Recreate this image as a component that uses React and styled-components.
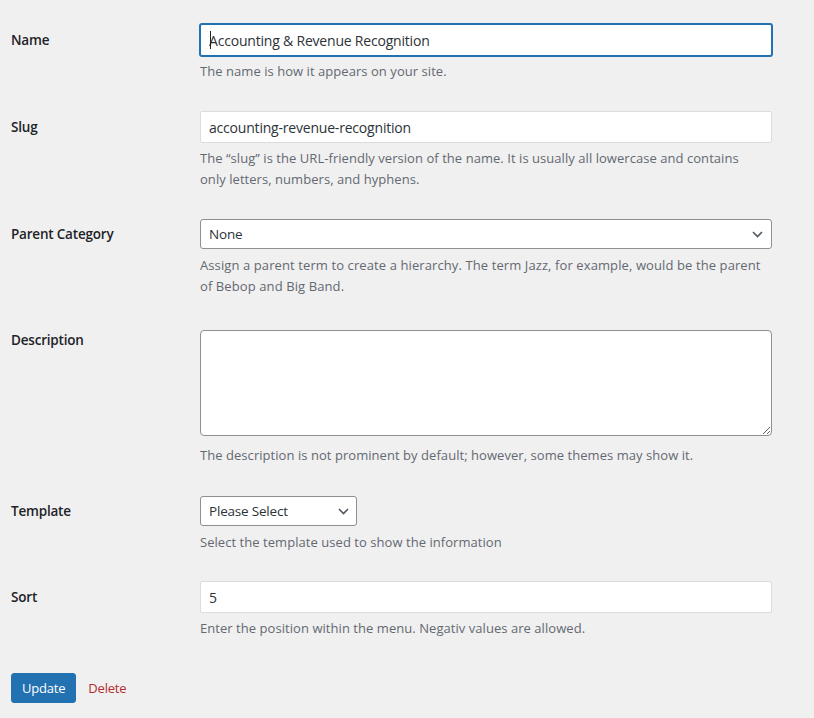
import React from "react";
import styled, { createGlobalStyle } from "styled-components";

const GlobalStyle = createGlobalStyle`
    html, body {
        margin: 0;
        padding: 0;
        background: #f0f0f1;
    }

    body {
        font-family: "Open Sans", "Liberation Sans", sans-serif;
        color: #1d2327;
    }
`;

const Form = styled.form`
    display: flex;
    flex-direction: column;
    padding: 24px 0 0 11px;
`;

const Row = styled.div`
    display: grid;
    grid-template-columns: 189px 602px;
    align-items: start;
    margin-bottom: ${(p) => p.$space || 29}px;
`;

const Label = styled.label`
    display: block;
    padding-top: ${(p) => (p.$top !== undefined ? p.$top : 6)}px;
    font-size: 13.5px;
    font-weight: 600;
    line-height: 20px;
    color: #1d2327;
    letter-spacing: -0.2px;
`;

const Field = styled.div`
    position: relative;
    display: flex;
    flex-direction: column;
    align-items: flex-start;
`;

const TextInput = styled.input`
    box-sizing: border-box;
    width: 572px;
    height: 32px;
    margin: 0;
    padding: 0 8px;
    border: 1px solid ${(p) => (p.$focus ? "#2271b1" : "#dcdcde")};
    border-radius: 2px;
    box-shadow: ${(p) => (p.$focus ? "0 0 0 1px #2271b1" : "none")};
    background: #fff;
    font-family: "Open Sans", "Liberation Sans", sans-serif;
    font-size: 14px;
    letter-spacing: -0.2px;
    color: #2c3338;
    outline: none;
`;

const Caret = styled.span`
    position: absolute;
    left: 10px;
    top: 7px;
    width: 1px;
    height: 18px;
    background: #1d2327;
`;

const SelectWrap = styled.div`
    position: relative;
    width: ${(p) => p.$width}px;
    margin-bottom: 1px;
`;

const Select = styled.select`
    box-sizing: border-box;
    display: block;
    width: 100%;
    height: 30px;
    margin: 0;
    padding: 0 24px 0 8px;
    border: 1px solid #8c8f94;
    border-radius: 3px;
    background: #fff;
    appearance: none;
    font-family: "Open Sans", "Liberation Sans", sans-serif;
    font-size: 13.5px;
    letter-spacing: -0.2px;
    color: #2c3338;
    outline: none;
`;

const Chevron = styled.svg`
    position: absolute;
    right: ${(p) => p.$right}px;
    top: 12px;
    width: 11px;
    height: 7px;
    pointer-events: none;
`;

const TextArea = styled.textarea`
    box-sizing: border-box;
    display: block;
    width: 572px;
    height: 106px;
    margin: 0 0 4px;
    padding: 6px 8px;
    border: 1px solid #8c8f94;
    border-radius: 4px;
    background: #fff;
    resize: vertical;
    font-family: "Open Sans", "Liberation Sans", sans-serif;
    font-size: 14px;
    color: #2c3338;
    outline: none;
`;

const Help = styled.p`
    margin: 5px 0 0;
    font-size: 13px;
    line-height: 21px;
    letter-spacing: ${(p) => p.$spacing || "0.05px"};
    color: #646970;
    white-space: nowrap;
`;

const Actions = styled.div`
    display: flex;
    align-items: center;
    gap: 12px;
`;

const Button = styled.button`
    height: 30px;
    padding: 0 10px;
    border: 1px solid #2271b1;
    border-radius: 3px;
    background: #2271b1;
    color: #fff;
    font-family: "Open Sans", "Liberation Sans", sans-serif;
    font-size: 13px;
    letter-spacing: -0.2px;
    cursor: pointer;
`;

const DeleteLink = styled.a`
    color: #b32d2e;
    font-size: 13px;
    letter-spacing: -0.2px;
    text-decoration: none;
    cursor: pointer;
`;

const ChevronIcon = ({ right }) => (
    <Chevron $right={right} viewBox="0 0 11 7">
        <path d="M1 1 L5.5 5.5 L10 1" fill="none" stroke="#50575e" strokeWidth="1.6" />
    </Chevron>
);

const App = () => {
    return (
        <>
            <GlobalStyle />
            <Form onSubmit={(e) => e.preventDefault()}>
                <Row>
                    <Label>Name</Label>
                    <Field>
                        <TextInput $focus defaultValue="Accounting & Revenue Recognition" />
                        <Caret />
                        <Help>The name is how it appears on your site.</Help>
                    </Field>
                </Row>

                <Row>
                    <Label>Slug</Label>
                    <Field>
                        <TextInput defaultValue="accounting-revenue-recognition" />
                        <Help>
                            The “slug” is the URL-friendly version of the name. It is usually all lowercase and contains
                            <br />
                            only letters, numbers, and hyphens.
                        </Help>
                    </Field>
                </Row>

                <Row $space={33}>
                    <Label $top={5}>Parent Category</Label>
                    <Field>
                        <SelectWrap $width={572}>
                            <Select defaultValue="none">
                                <option value="none">None</option>
                            </Select>
                            <ChevronIcon right={9} />
                        </SelectWrap>
                        <Help $spacing="0.1px">
                            Assign a parent term to create a hierarchy. The term Jazz, for example, would be the parent
                            <br />
                            of Bebop and Big Band.
                        </Help>
                    </Field>
                </Row>

                <Row $space={30}>
                    <Label $top={0}>Description</Label>
                    <Field>
                        <TextArea />
                        <Help>The description is not prominent by default; however, some themes may show it.</Help>
                    </Field>
                </Row>

                <Row $space={28}>
                    <Label $top={5}>Template</Label>
                    <Field>
                        <SelectWrap $width={157}>
                            <Select defaultValue="">
                                <option value="">Please Select</option>
                            </Select>
                            <ChevronIcon right={8} />
                        </SelectWrap>
                        <Help>Select the template used to show the information</Help>
                    </Field>
                </Row>

                <Row $space={34}>
                    <Label>Sort</Label>
                    <Field>
                        <TextInput defaultValue="5" />
                        <Help>Enter the position within the menu. Negativ values are allowed.</Help>
                    </Field>
                </Row>

                <Actions>
                    <Button type="submit">Update</Button>
                    <DeleteLink>Delete</DeleteLink>
                </Actions>
            </Form>
        </>
    );
};

export default App;
